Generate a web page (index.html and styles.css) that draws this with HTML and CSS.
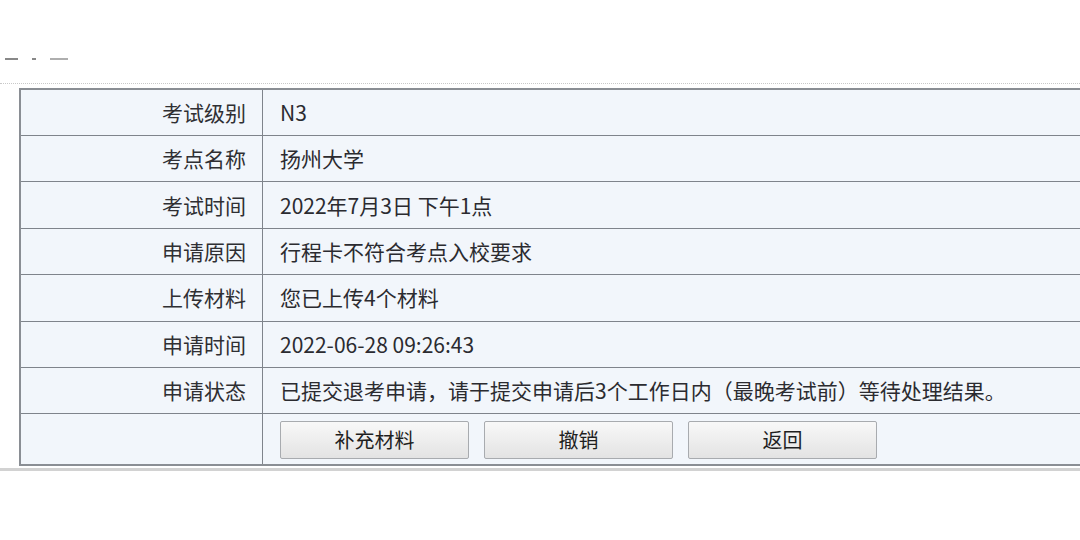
FILE: index.html
```html
<!DOCTYPE html>
<html lang="zh-CN">
<head>
<meta charset="utf-8">
<link rel="stylesheet" href="styles.css">
</head>
<body>
<div class="page">
  <div class="topbar">
    <span class="dash d1"></span><span class="dash d2"></span><span class="dash d3"></span>
  </div>
  <div class="content">
    <table class="info">
      <tr><th>考试级别</th><td>N3</td></tr>
      <tr><th>考点名称</th><td>扬州大学</td></tr>
      <tr><th>考试时间</th><td>2022年7月3日 下午1点</td></tr>
      <tr><th>申请原因</th><td>行程卡不符合考点入校要求</td></tr>
      <tr><th>上传材料</th><td>您已上传4个材料</td></tr>
      <tr><th>申请时间</th><td>2022-06-28 09:26:43</td></tr>
      <tr><th>申请状态</th><td>已提交退考申请，请于提交申请后3个工作日内（最晚考试前）等待处理结果。</td></tr>
      <tr class="actions"><th></th><td>
        <div class="btns">
          <button class="btn">补充材料</button>
          <button class="btn">撤销</button>
          <button class="btn">返回</button>
        </div>
      </td></tr>
    </table>
  </div>
  <div class="footer-line"></div>
</div>
</body>
</html>
```

FILE: styles.css
```css
html, body {
  margin: 0;
  padding: 0;
  background: #ffffff;
  overflow: hidden;
}
.page {
  width: 1080px;
  height: 540px;
  overflow: hidden;
  font-family: "Noto Sans CJK SC", "Noto Sans", sans-serif;
  color: #2f2f33;
}
.topbar {
  height: 84px;
  border-bottom: 1px dotted #c9c9c9;
  display: flex;
  align-items: flex-start;
  padding-top: 58px;
  box-sizing: border-box;
}
.dash {
  display: block;
  height: 2px;
  background: #6a6a6a;
  opacity: 0.8;
}
.d1 { width: 13px; margin-left: 5px; }
.d2 { width: 4px; margin-left: 14px; }
.d3 { width: 18px; margin-left: 14px; background: #9a9a9a; }
.content {
  padding: 4px 0 0 19px;
  overflow: hidden;
}
.info {
  border-collapse: collapse;
  width: 1100px;
  background: #f2f6fb;
  border-top: 2px solid #8a8e94;
  border-left: 2px solid #8a8e94;
  border-bottom: 2px solid #8a8e94;
}
.info th, .info td {
  height: 45.4px;
  padding: 0;
  border-bottom: 1px solid #7f848b;
  font-size: 21px;
  font-weight: normal;
  line-height: 1;
}
.info th {
  width: 225px;
  text-align: right;
  padding-right: 16px;
  border-right: 1px solid #7f848b;
  color: #2f2f33;
}
.info td {
  text-align: left;
  padding-left: 17px;
  color: #2b2b30;
}
.info tr:first-child th, .info tr:first-child td { height: 45px; }
.info .actions th, .info .actions td {
  height: 50px;
  border-bottom: none;
}
.btns {
  display: flex;
  gap: 15px;
  align-items: center;
  padding-top: 1px;
}
.btn {
  width: 189px;
  height: 38px;
  border: 1px solid #a8abaf;
  border-radius: 2px;
  background: linear-gradient(#f8f8f8, #e3e3e3);
  font-family: "Noto Sans CJK SC", "Noto Sans", sans-serif;
  font-size: 20px;
  color: #1f1f1f;
  padding: 0;
  cursor: pointer;
}
.footer-line {
  height: 3px;
  background: #d2d2d2;
  margin-top: 2px;
}
```
